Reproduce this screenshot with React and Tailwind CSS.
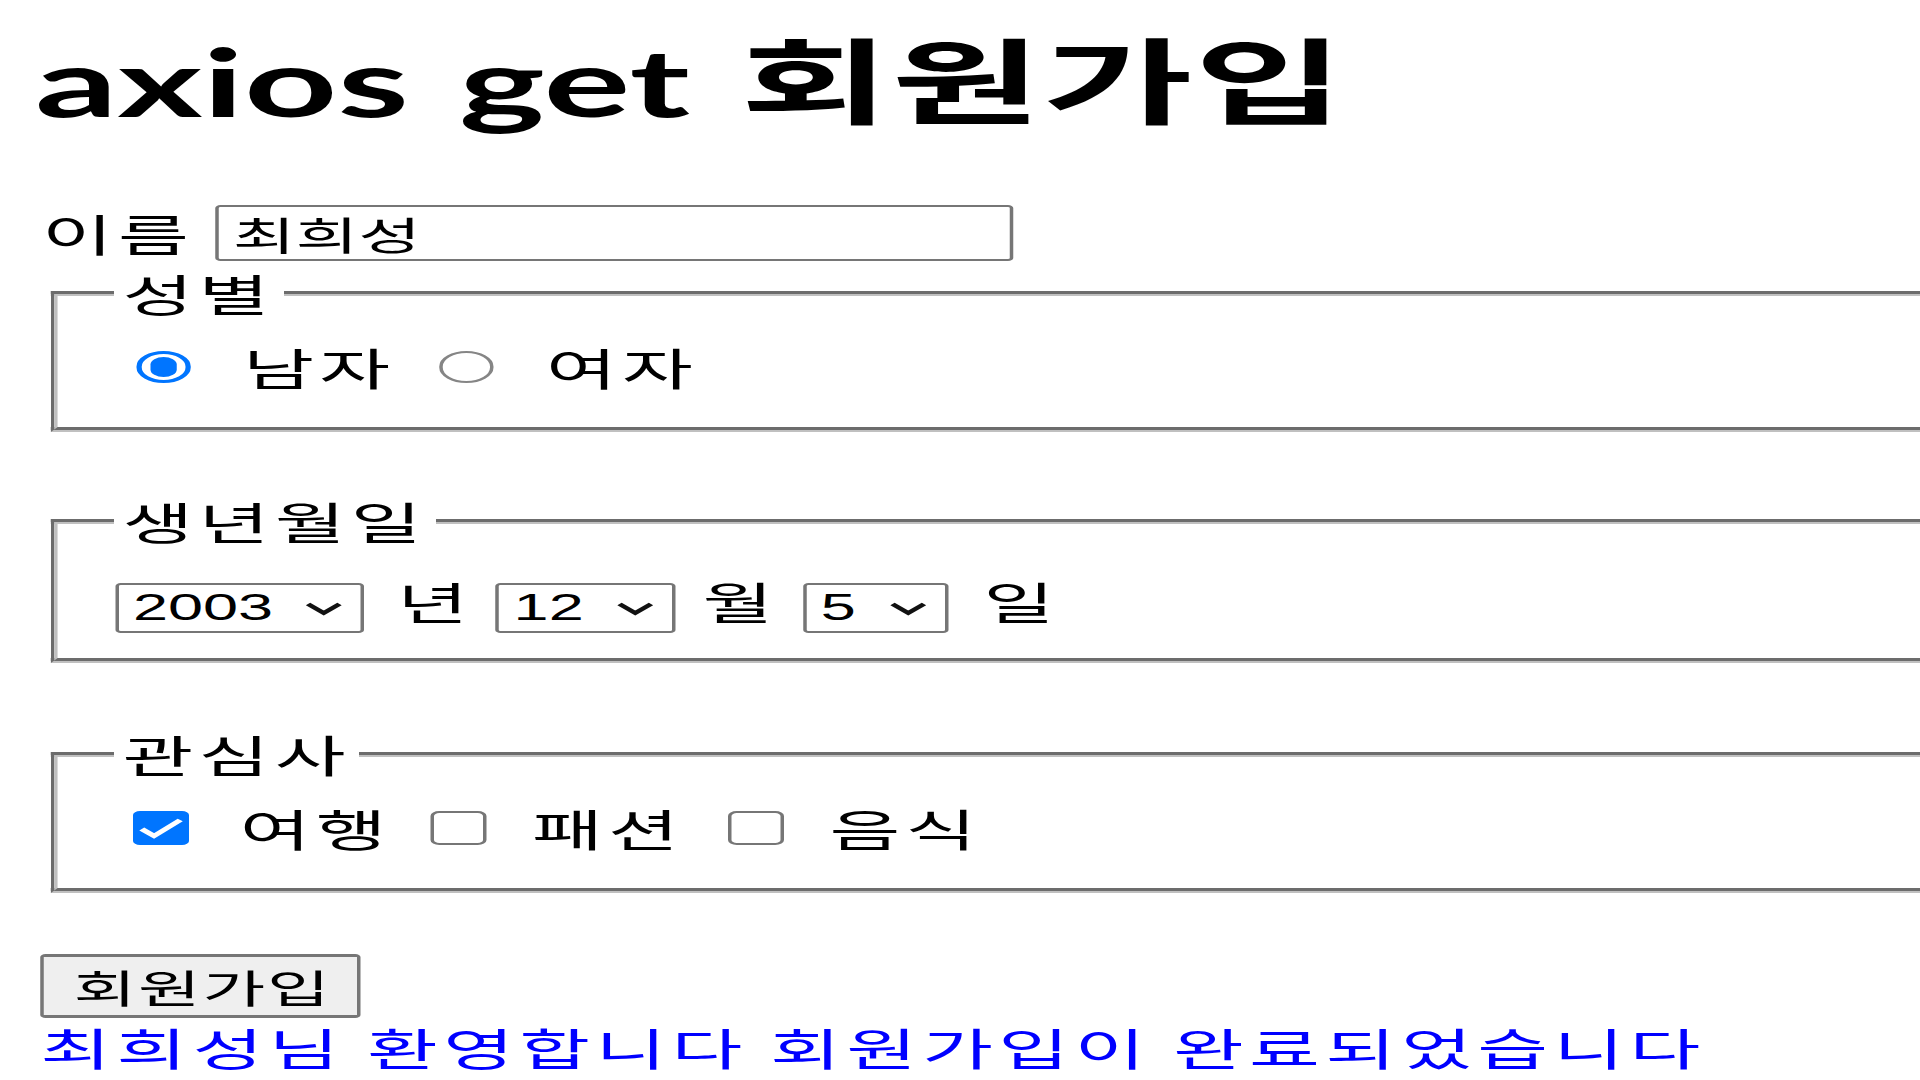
const kr = "font-['Noto_Sans_CJK_KR','Noto_Sans',sans-serif]";

const Radio = ({ checked }) =>
  checked ? (
    <div className="w-[31px] h-[32px] rounded-full border-[3px] border-[#0075ff] px-[5px] py-[3px] bg-white">
      <div className="w-full h-full rounded-full bg-[#0075ff]" />
    </div>
  ) : (
    <div className="w-[31px] h-[32px] rounded-full border-2 border-[#858585] bg-white" />
  );

const Checkbox = ({ checked }) =>
  checked ? (
    <div className="w-[32px] h-[34px] rounded-[4px] bg-[#0075ff] flex items-center justify-center">
      <svg width="32" height="34" viewBox="0 0 32 34">
        <polyline points="5,18 12,25 27,9" fill="none" stroke="white" strokeWidth="4" />
      </svg>
    </div>
  ) : (
    <div className="w-[32px] h-[34px] rounded-[5px] border-2 border-[#767676] bg-white" />
  );

const Select = ({ value, w }) => (
  <div className={`flex items-center justify-between h-[50px] border-2 border-[#767676] rounded-[3px] pl-[8px] pr-[10px] font-['Liberation_Sans',sans-serif] text-[36px] ${w}`}>
    <span className="leading-[46px]">{value}</span>
    <svg width="22" height="15" viewBox="0 0 22 15" preserveAspectRatio="none">
      <polyline points="2,3 11,12 20,3" fill="none" stroke="#111" strokeWidth="3.5" />
    </svg>
  </div>
);

const Fieldset = ({ legend, className, children }) => (
  <fieldset className={`ml-[29px] w-[1100px] [border-style:groove] border-[#c0c0c0] border-y-[5px] border-x-4 pl-[32px] ${className}`}>
    <legend className="px-[5px] text-[44px] leading-[40px] tracking-[3px]">{legend}</legend>
    {children}
  </fieldset>
);

export default function App() {
  return (
    <div className={`w-[1920px] h-[1080px] overflow-hidden bg-white text-black ${kr}`}>
      <div className="origin-top-left scale-x-[1.75] w-[1090px]">
        <h1 className="w-fit ml-[20px] pt-[35px] text-[93px] leading-[93px] font-bold font-['Lato','Noto_Sans_CJK_KR',sans-serif] [word-spacing:6px]">
          axios get <span className="tracking-[1px]">회원가입</span>
        </h1>

        <div className="mt-[77px] ml-[24px] flex items-center h-[56px]">
          <span className="text-[44px] leading-[44px] tracking-[3px]">이름</span>
          <div className="ml-[12px] w-[456px] h-[56px] border-2 border-[#767676] rounded-[3px] pl-[8px] flex items-center">
            <span className="text-[39px] leading-[44px]">최희성</span>
          </div>
        </div>

        <Fieldset legend="성별" className="mt-[12px] pt-[34px] pb-[40px]">
          <div className="flex items-center h-[40px] text-[44px] leading-[44px]">
            <div className="ml-[13px]"><Radio checked /></div>
            <span className="ml-[30px] tracking-[3px]">남자</span>
            <div className="ml-[25px]"><Radio /></div>
            <span className="ml-[30px] tracking-[3px]">여자</span>
          </div>
        </Fieldset>

        <Fieldset legend="생년월일" className="mt-[69px] pt-[38px] pb-[29px]">
          <div className="flex items-baseline h-[50px] text-[44px] leading-[44px]">
            <div className="ml-[1px]"><Select value="2003" w="w-[142px]" /></div>
            <span className="ml-[19px]">년</span>
            <div className="ml-[16px]"><Select value="12" w="w-[103px]" /></div>
            <span className="ml-[15px]">월</span>
            <div className="ml-[17px]"><Select value="5" w="w-[83px]" /></div>
            <span className="ml-[20px]">일</span>
          </div>
        </Fieldset>

        <Fieldset legend="관심사" className="mt-[71px] pt-[34px] pb-[40px]">
          <div className="flex items-center h-[40px] text-[44px] leading-[44px]">
            <div className="ml-[11px]"><Checkbox checked /></div>
            <span className="ml-[29px] tracking-[3px]">여행</span>
            <div className="ml-[22px]"><Checkbox /></div>
            <span className="ml-[26px] tracking-[3px]">패션</span>
            <div className="ml-[25px]"><Checkbox /></div>
            <span className="ml-[26px] tracking-[3px]">음식</span>
          </div>
        </Fieldset>

        <button className="block mt-[61px] ml-[23px] w-[183px] h-[64px] bg-[#efefef] border-x-2 border-y-[3px] border-[#767676] rounded-[3px] pl-[17px] text-left text-[39px] leading-[38px] tracking-[1px]">
          회원가입
        </button>

        <p className="w-fit mt-[9px] ml-[23px] text-[44px] leading-[40px] tracking-[3px] text-[#0000ff]">
          최희성님 환영합니다 회원가입이 완료되었습니다
        </p>
      </div>
    </div>
  );
}
